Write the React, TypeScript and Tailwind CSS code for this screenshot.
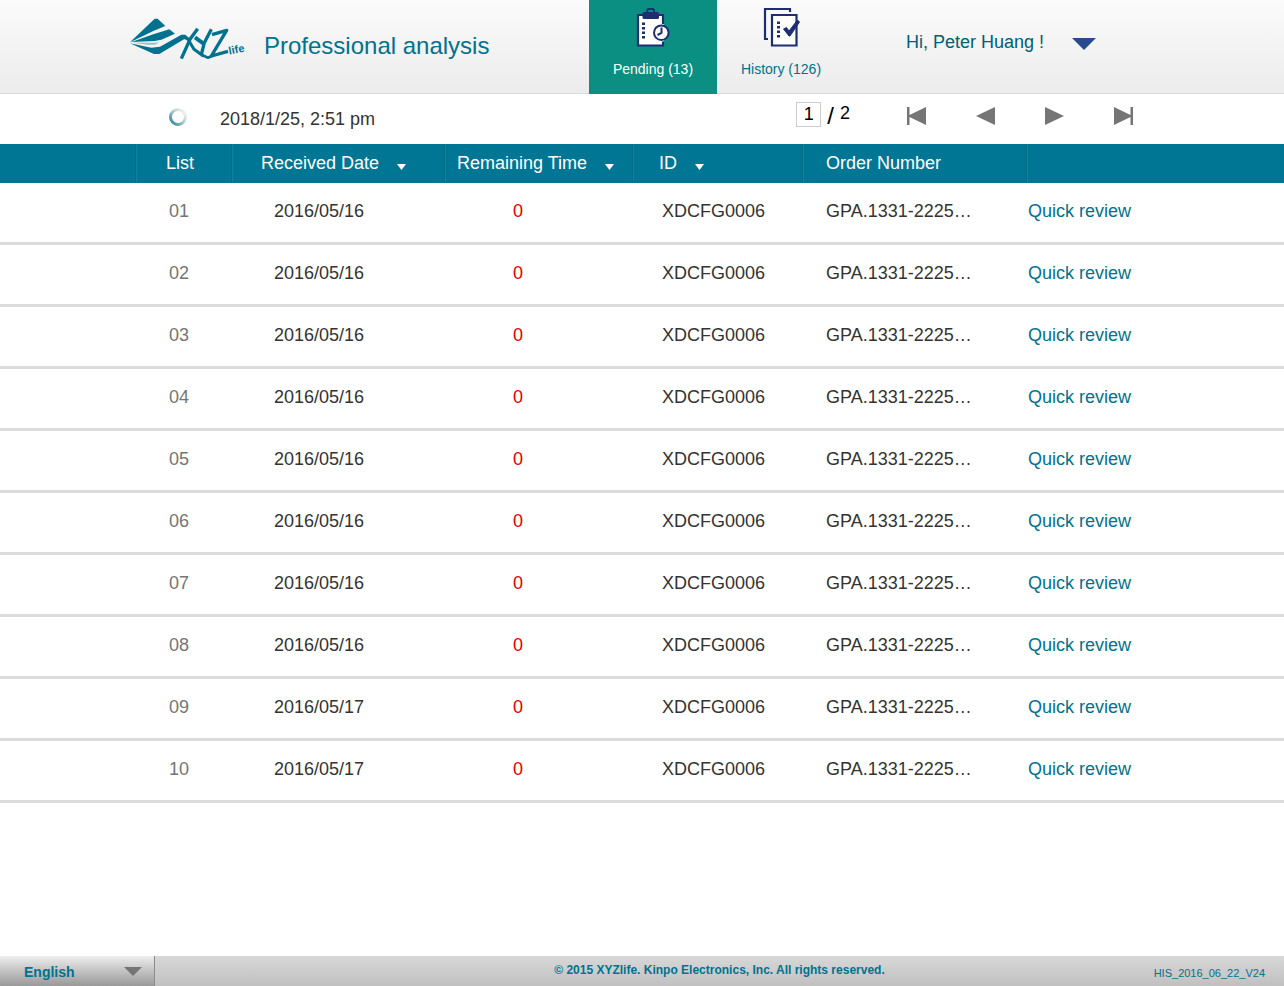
import React from "react";

const sans = "font-['Liberation_Sans',Arial,sans-serif]";

const orders = [
  "2016/05/16",
  "2016/05/16",
  "2016/05/16",
  "2016/05/16",
  "2016/05/16",
  "2016/05/16",
  "2016/05/16",
  "2016/05/16",
  "2016/05/17",
  "2016/05/17",
].map((date, i) => ({
  no: String(i + 1).padStart(2, "0"),
  date,
  remaining: 0,
  id: "XDCFG0006",
  order: "GPA.1331-2225…",
}));

function Logo() {
  return (
    <svg viewBox="6 12 345 126" className="h-[42px] w-[115px]" role="img" aria-label="XYZlife">
      <g fill="#00728f">
        <path d="M6 85 L80 14 H89 L112 36 L76 51 Z" />
        <path d="M10 84 L76 61 L124 46 L141 59 L100 77 L80 81 Z" />
        <path d="M6 88 L70 101 L96 98 L160 62 H172 L188 76 L168 76 L94 120 H78 Z" />
        <path d="M12 86 L84 86 L94 84 L82 92 L60 92 Z" opacity="0.4" />
      </g>
      <g fill="none" stroke="#00728f" strokeLinejoin="round">
        <path d="M209 44 L186 76 L160 134" strokeWidth="10" />
        <path d="M166 67 L180 76 L198 106 L226 126" strokeWidth="9" />
        <path d="M201 70 L228 90" strokeWidth="12" />
        <path d="M250 46 L229 86 L220 122" strokeWidth="10" />
        <path d="M252 62 L296 49 L250 126 L300 112" strokeWidth="10" />
        <path d="M220 122 L240 131 L260 122" strokeWidth="8" />
      </g>
      <text
        x="304"
        y="122"
        transform="rotate(-11 304 122)"
        fill="#00728f"
        fontFamily="Liberation Sans Narrow, Liberation Sans, sans-serif"
        fontWeight="700"
        fontSize="33"
      >
        life
      </text>
    </svg>
  );
}

function PendingIcon() {
  return (
    <svg viewBox="0 0 34 40" className="h-10 w-[34px]" aria-hidden="true">
      <path d="M2 7H27V37.500H2Z" fill="#fff" stroke="#1d2f72" strokeWidth="2.200" />
      <rect x="6.500" y="4" width="16.500" height="7" rx="1.500" fill="#1d2f72" />
      <path d="M11.300 5V2.500Q11.300 1 12.800 1H16.500Q18 1 18 2.500V5" fill="none" stroke="#1d2f72" strokeWidth="2" />
      <path d="M7.500 14.500V30.500" stroke="#1d2f72" strokeWidth="3" strokeDasharray="2.500 2" />
      <circle cx="25.300" cy="24.700" r="9" fill="#fff" />
      <path d="M28.100 14.500V35H35V14.500Z" fill="#0b8f82" />
      <circle cx="25.300" cy="24.700" r="7.300" fill="#fff" stroke="#1d2f72" strokeWidth="2" />
      <path d="M25.500 19.500V25L21.500 27" fill="none" stroke="#1d2f72" strokeWidth="2" />
    </svg>
  );
}

function HistoryIcon() {
  return (
    <svg viewBox="0 0 37 40" className="h-10 w-[37px]" aria-hidden="true">
      <path d="M5 31H2V1H27V4" fill="none" stroke="#1d2f72" strokeWidth="2.200" />
      <path d="M9 7H33.500V37.500H9Z" fill="#fff" stroke="#1d2f72" strokeWidth="2.200" />
      <path d="M15.500 13.500V29.500" stroke="#1d2f72" strokeWidth="3" strokeDasharray="2.500 2" />
      <path d="M20.500 21L23.500 19.500L26 23L34.500 12L36.500 14L27 28H26Z" fill="#1d2f72" stroke="#1d2f72" />
    </svg>
  );
}

function Spinner() {
  return (
    <svg viewBox="0 0 18 18" className="size-[18px]" role="img" aria-label="Refreshing">
      <defs>
        <linearGradient id="ring" x1="0.100" y1="0.900" x2="0.850" y2="0.200">
          <stop offset="0" stopColor="#3d8ba3" />
          <stop offset="0.500" stopColor="#9cc3cf" />
          <stop offset="1" stopColor="#ececec" />
        </linearGradient>
      </defs>
      <circle cx="9" cy="9" r="7.500" fill="none" stroke="url(#ring)" strokeWidth="3" />
    </svg>
  );
}

function PageButton({ label, d }: { label: string; d: string }) {
  return (
    <button type="button" aria-label={label} className="h-[18px] w-[19px] cursor-pointer">
      <svg viewBox="0 0 19 18" className="h-[18px] w-[19px]" fill="#757575" aria-hidden="true">
        <path d={d} />
      </svg>
    </button>
  );
}

function HeadCell({ label, pad, sortable }: { label: string; pad: string; sortable?: boolean }) {
  return (
    <th
      scope="col"
      className={`${pad} border-r border-l border-r-[#006c88] border-l-[#10819e] pt-0 pb-[2px] text-left font-normal whitespace-nowrap`}
    >
      {sortable ? (
        <button type="button" className="flex cursor-pointer items-center gap-[18px]">
          {label}
          <svg viewBox="0 0 9 6" className="mt-2 h-[6px] w-[9px]" fill="#fff" aria-hidden="true">
            <path d="M0 0H9L4.500 6Z" />
          </svg>
        </button>
      ) : (
        label
      )}
    </th>
  );
}

export default function App() {
  return (
    <div className={`${sans} flex min-h-screen flex-col bg-white text-lg leading-5 text-[#333]`}>
      <header className="border-b border-[#dcdcdc] bg-linear-to-b from-[#fbfbfb] to-[#ececec]">
        <div className="mx-auto flex h-[93px] max-w-[1024px]">
          <a href="#home" className="flex w-[459px] items-start gap-[19px] pt-[18px] text-[#00728f]">
            <Logo />
            <span className="pt-[14px] text-2xl leading-7">Professional analysis</span>
          </a>
          <nav className="flex text-sm leading-4">
            <a
              href="#pending"
              aria-current="page"
              className="-mb-px flex w-32 flex-col items-center gap-[13px] bg-[#0b8f82] pt-2 text-white"
            >
              <PendingIcon />
              Pending (13)
            </a>
            <a href="#history" className="flex w-32 flex-col items-center gap-[13px] pt-2 text-[#00728f]">
              <HistoryIcon />
              History (126)
            </a>
          </nav>
          <button
            type="button"
            className="ml-[61px] flex h-[84px] cursor-pointer items-center gap-7 text-[#005e75]"
          >
            Hi, Peter Huang !
            <svg viewBox="0 0 24 12" className="mt-1 h-3 w-6" fill="#294a8c" aria-hidden="true">
              <path d="M0 0H24L12 12Z" />
            </svg>
          </button>
        </div>
      </header>

      <div className="mx-auto flex h-[50px] w-full max-w-[1024px] items-start">
        <div className="flex flex-1 items-start gap-[33px] pt-[14px] pl-[39px]">
          <Spinner />
          <time dateTime="2018-01-25T14:51" className="pt-px">
            2018/1/25, 2:51 pm
          </time>
        </div>
        <div className="flex items-start pt-2 pr-[21px] text-black">
          <input
            type="text"
            aria-label="Page"
            defaultValue="1"
            className="h-[25px] w-[25px] border border-[#ccc] bg-white px-1 text-center text-lg leading-5"
          />
          <span className="ml-[6px] text-2xl leading-7">/</span>
          <span className="ml-[6px] pt-px">2</span>
          <div className="ml-[57px] flex gap-[50px] pt-[5px]">
            <PageButton label="First page" d="M0 0H2.500V8L19 0V18L2.500 10V18H0Z" />
            <PageButton label="Previous page" d="M0 9L19 0V18Z" />
            <PageButton label="Next page" d="M19 9L0 0V18Z" />
            <PageButton label="Last page" d="M19 0H16.500V8L0 0V18L16.500 10V18H19Z" />
          </div>
        </div>
      </div>

      <main className="flex-1">
        <table className="w-full table-fixed border-separate border-spacing-0">
          <colgroup>
            <col />
            <col className="w-[96px]" />
            <col className="w-[213px]" />
            <col className="w-[188px]" />
            <col className="w-[170px]" />
            <col className="w-[224px]" />
            <col className="w-[121px]" />
            <col />
          </colgroup>
          <thead>
            <tr className="h-[39px] bg-[#007695] text-white">
              <td className="border-r border-[#006c88] p-0" />
              <HeadCell label="List" pad="pl-[29px]" />
              <HeadCell label="Received Date" pad="pl-7" sortable />
              <HeadCell label="Remaining Time" pad="pl-[11px]" sortable />
              <HeadCell label="ID" pad="pl-[25px]" sortable />
              <HeadCell label="Order Number" pad="pl-[22px]" />
              <td className="border-l border-[#10819e] p-0" />
              <td className="p-0" />
            </tr>
          </thead>
          <tbody>
            {orders.map((o) => (
              <tr
                key={o.no}
                className="h-[62px] text-[#333] [&>td]:border-b-3 [&>td]:border-[#dcdcdc] [&>td]:pb-[3px]"
              >
                <td />
                <td className="pl-[33px] text-[#757575]">{o.no}</td>
                <td className="pl-[42px]">{o.date}</td>
                <td className="pl-[68px] text-[#e00000]">{o.remaining}</td>
                <td className="pl-[29px]">{o.id}</td>
                <td className="pl-[23px]">{o.order}</td>
                <td className="pl-px whitespace-nowrap">
                  <a href={`#review-${o.no}`} className="text-[#00728f]">
                    Quick review
                  </a>
                </td>
                <td />
              </tr>
            ))}
          </tbody>
        </table>
      </main>

      <footer className="flex h-[30px] bg-linear-to-b from-[#d8d8d8] to-[#c0c0c0] text-[#00728f]">
        <div className="grid w-[155px] items-center border-r border-[#8c8c8c] bg-linear-to-b from-[#eeeeee] to-[#999999]">
          <select
            aria-label="Language"
            className="col-start-1 row-start-1 h-[30px] w-full cursor-pointer appearance-none pt-[2px] pl-6 text-sm font-bold outline-none"
          >
            <option>English</option>
          </select>
          <svg
            viewBox="0 0 18 9"
            className="pointer-events-none col-start-1 row-start-1 mr-3 h-[9px] w-[18px] justify-self-end"
            fill="#757575"
            aria-hidden="true"
          >
            <path d="M0 0H18L9 9Z" />
          </svg>
        </div>
        <div className="grid flex-1 grid-cols-[1fr_auto_1fr]">
          <p className="col-start-2 pt-[6px] text-xs leading-4 font-bold">
            © 2015 XYZlife. Kinpo Electronics, Inc. All rights reserved.
          </p>
          <p className="justify-self-end pt-[9px] pr-[19px] text-[11px] leading-4">HIS_2016_06_22_V24</p>
        </div>
      </footer>
    </div>
  );
}
